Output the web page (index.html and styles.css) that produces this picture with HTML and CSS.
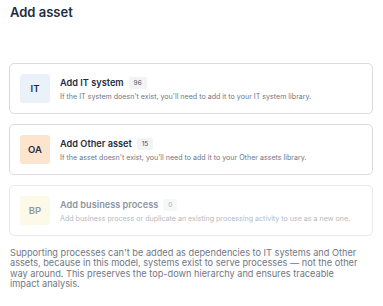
FILE: index.html
```html
<!DOCTYPE html>
<html lang="en">

<head>
    <meta charset="UTF-8">
    <meta name="viewport" content="width=device-width, initial-scale=1.0">
    <title>Add asset</title>
    <link rel="stylesheet" href="styles.css">
</head>

<body>
    <div class="panel">
        <h1 class="title">Add asset</h1>

        <div class="asset-list">
            <div class="asset-card">
                <div class="asset-icon icon-it">IT</div>
                <div class="asset-info">
                    <div class="asset-head">
                        <span class="asset-name">Add IT system</span>
                        <span class="asset-count">96</span>
                    </div>
                    <p class="asset-desc">If the IT system doesn't exist, you'll need to add it to your IT system library.</p>
                </div>
            </div>

            <div class="asset-card">
                <div class="asset-icon icon-oa">OA</div>
                <div class="asset-info">
                    <div class="asset-head">
                        <span class="asset-name">Add Other asset</span>
                        <span class="asset-count">15</span>
                    </div>
                    <p class="asset-desc">If the asset doesn't exist, you'll need to add it to your Other assets library.</p>
                </div>
            </div>

            <div class="asset-card disabled">
                <div class="asset-icon icon-bp">BP</div>
                <div class="asset-info">
                    <div class="asset-head">
                        <span class="asset-name">Add business process</span>
                        <span class="asset-count">0</span>
                    </div>
                    <p class="asset-desc">Add business process or duplicate an existing processing activity to use as a new one.</p>
                </div>
            </div>
        </div>

        <p class="note">
            Supporting processes can't be added as dependencies to IT systems and Other assets, because in this model, systems exist to serve processes — not the other way around. This preserves the top-down hierarchy and ensures traceable impact analysis.
        </p>
    </div>
</body>

</html>
```

FILE: styles.css
```css
* {
    margin: 0;
    padding: 0;
    box-sizing: border-box;
}

body {
    font-family: 'Inter', 'DejaVu Sans', sans-serif;
    background: #ffffff;
    color: #1f2d42;
}

.panel {
    padding: 3px 10px 0 9px;
}

.title {
    font-size: 13px;
    font-weight: 600;
    line-height: 18px;
    color: #1f2d42;
    padding-left: 1px;
    margin-bottom: 42px;
}

.asset-list {
    display: flex;
    flex-direction: column;
    gap: 10px;
}

.asset-card {
    display: flex;
    align-items: center;
    gap: 10px;
    padding: 10px;
    border: 1px solid #d8dce2;
    border-radius: 5px;
    background: #fff;
}

.asset-icon {
    width: 30px;
    height: 29px;
    flex-shrink: 0;
    border-radius: 3px;
    display: flex;
    justify-content: center;
    align-items: center;
    font-size: 9.5px;
    font-weight: 600;
    color: #1f2d42;
}

.icon-it {
    background: #ebf1f8;
}

.icon-oa {
    background: #fde4cf;
}

.icon-bp {
    background: #fcf9e8;
    color: #8d96a3;
}

.asset-info {
    display: flex;
    flex-direction: column;
    gap: 2px;
}

.asset-head {
    display: flex;
    align-items: center;
    gap: 5px;
}

.asset-name {
    font-size: 9.2px;
    font-weight: 600;
    line-height: 14px;
    color: #1f2d42;
}

.asset-count {
    font-size: 6.5px;
    line-height: 12px;
    padding: 0 5px;
    border-radius: 2px;
    background: #f1f3f5;
    color: #4b5565;
}

.asset-desc {
    font-size: 7.1px;
    line-height: 10px;
    color: #6f7785;
}

.disabled {
    border-color: #e7e9ed;
}

.disabled .asset-name {
    color: #8d96a3;
}

.disabled .asset-count {
    background: #f6f7f9;
    color: #a3aab5;
}

.disabled .asset-desc {
    color: #b3b9c2;
}

.note {
    margin-top: 12px;
    padding: 0 15px 0 1px;
    font-size: 9.2px;
    line-height: 10.3px;
    color: #6f7785;
}
```
